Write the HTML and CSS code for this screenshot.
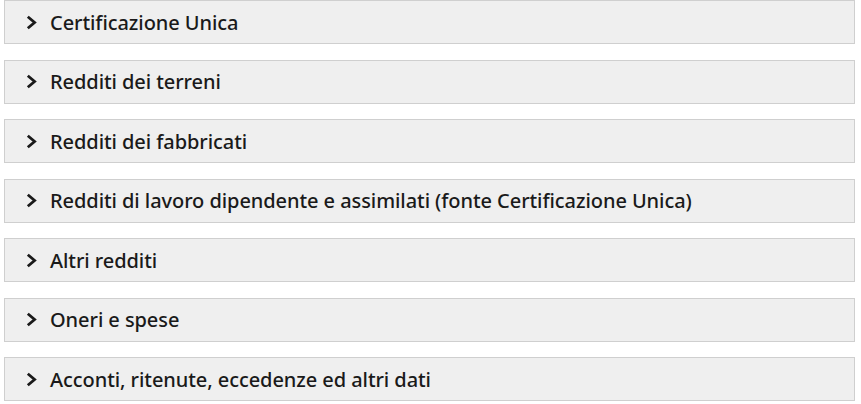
FILE: index.html
```html
<html>

<head>
    <title>Quadri della dichiarazione</title>
    <meta charset="utf-8">
    <link rel="stylesheet" href="styles.css">
</head>

<body>
    <div class="accordion">
        <div class="panel">
            <svg class="chevron" viewBox="0 0 11 15"><polyline points="1.8,1.8 8.6,7.5 1.8,13.2" /></svg>
            <span class="panelTitle">Certificazione Unica</span>
        </div>
        <div class="panel">
            <svg class="chevron" viewBox="0 0 11 15"><polyline points="1.8,1.8 8.6,7.5 1.8,13.2" /></svg>
            <span class="panelTitle">Redditi dei terreni</span>
        </div>
        <div class="panel">
            <svg class="chevron" viewBox="0 0 11 15"><polyline points="1.8,1.8 8.6,7.5 1.8,13.2" /></svg>
            <span class="panelTitle">Redditi dei fabbricati</span>
        </div>
        <div class="panel">
            <svg class="chevron" viewBox="0 0 11 15"><polyline points="1.8,1.8 8.6,7.5 1.8,13.2" /></svg>
            <span class="panelTitle">Redditi di lavoro dipendente e assimilati (fonte Certificazione Unica)</span>
        </div>
        <div class="panel">
            <svg class="chevron" viewBox="0 0 11 15"><polyline points="1.8,1.8 8.6,7.5 1.8,13.2" /></svg>
            <span class="panelTitle">Altri redditi</span>
        </div>
        <div class="panel">
            <svg class="chevron" viewBox="0 0 11 15"><polyline points="1.8,1.8 8.6,7.5 1.8,13.2" /></svg>
            <span class="panelTitle">Oneri e spese</span>
        </div>
        <div class="panel">
            <svg class="chevron" viewBox="0 0 11 15"><polyline points="1.8,1.8 8.6,7.5 1.8,13.2" /></svg>
            <span class="panelTitle">Acconti, ritenute, eccedenze ed altri dati</span>
        </div>
    </div>
</body>

</html>
```

FILE: styles.css
```css
body {
    margin: 0px;
    background-color: #ffffff;
    font-family: "Noto Sans", "Open Sans", sans-serif;
    color: #1a1a1a;
}

.accordion {
    display: flex;
    flex-direction: column;
    gap: 15.5px;
    padding: 0px 6px 0px 4px;
}

.panel {
    display: flex;
    align-items: center;
    height: 42px;
    border: 1px solid #cfcfcf;
    background-color: #efefef;
    padding-left: 21px;
}

.chevron {
    width: 11px;
    height: 15px;
    margin-right: 13px;
    fill: none;
    stroke: #1a1a1a;
    stroke-width: 2.8;
}

.panelTitle {
    font-size: 20px;
    font-weight: 500;
    letter-spacing: -0.07px;
}
```
